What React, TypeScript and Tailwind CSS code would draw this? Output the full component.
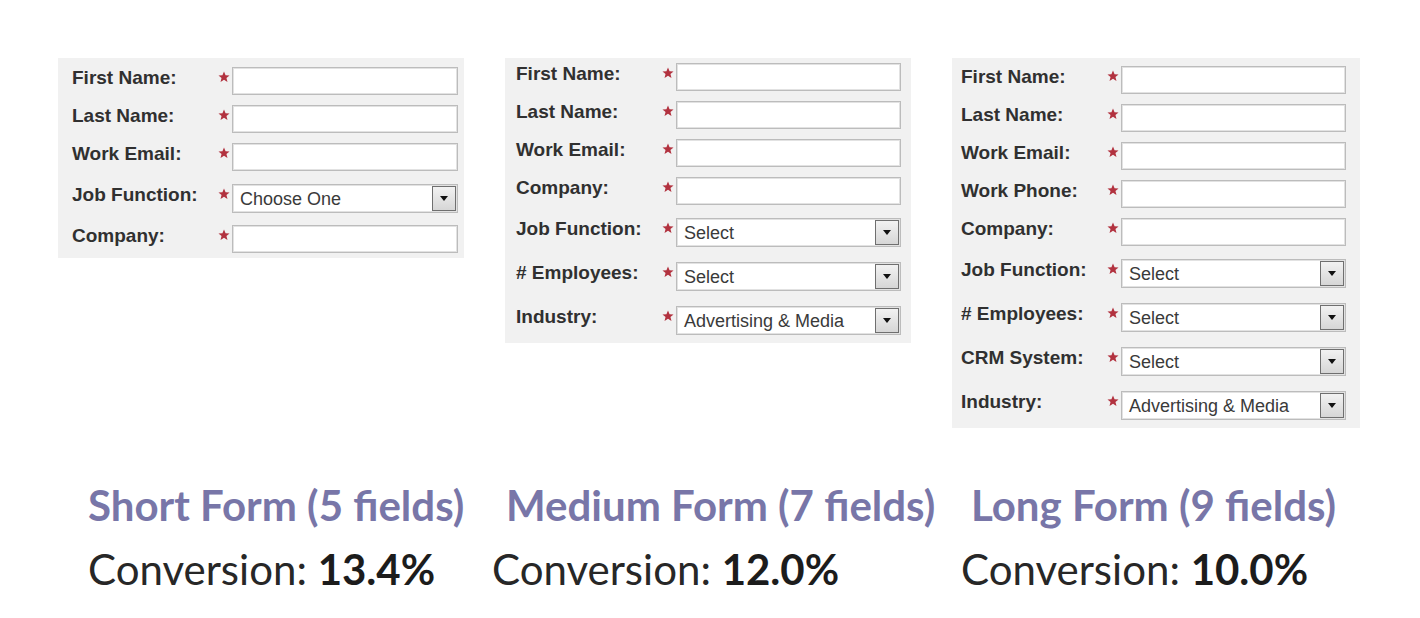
import React from "react";

type Field = { label: string; select?: string };

const shortForm: Field[] = [
  { label: "First Name:" },
  { label: "Last Name:" },
  { label: "Work Email:" },
  { label: "Job Function:", select: "Choose One" },
  { label: "Company:" },
];

const mediumForm: Field[] = [
  { label: "First Name:" },
  { label: "Last Name:" },
  { label: "Work Email:" },
  { label: "Company:" },
  { label: "Job Function:", select: "Select" },
  { label: "# Employees:", select: "Select" },
  { label: "Industry:", select: "Advertising & Media" },
];

const longForm: Field[] = [
  { label: "First Name:" },
  { label: "Last Name:" },
  { label: "Work Email:" },
  { label: "Work Phone:" },
  { label: "Company:" },
  { label: "Job Function:", select: "Select" },
  { label: "# Employees:", select: "Select" },
  { label: "CRM System:", select: "Select" },
  { label: "Industry:", select: "Advertising & Media" },
];

function Star() {
  return (
    <svg width="12" height="12" viewBox="0 0 20 20" className="mt-[4px]">
      <path
        d="M10 1 L12.6 7.2 L19.2 7.6 L14.1 11.8 L15.8 18.3 L10 14.7 L4.2 18.3 L5.9 11.8 L0.8 7.6 L7.4 7.2 Z"
        fill="#b2323f"
      />
    </svg>
  );
}

function Row({ f, inputW }: { f: Field; inputW: string }) {
  const font = { fontFamily: '"Liberation Sans", Arial, sans-serif' };
  return (
    <div className={f.select ? "flex items-start shrink-0 h-[44px] pt-[3px]" : "flex items-start shrink-0 h-[38px]"}>
      <div className="w-[146px] shrink-0 text-[19px] leading-[22px] font-bold text-[#303030] whitespace-nowrap" style={font}>
        {f.label}
      </div>
      <div className="w-[14px] shrink-0 flex justify-start">
        <Star />
      </div>
      {f.select ? (
        <div className={`${inputW} h-[29px] shrink-0 bg-white border border-[#bcbcbc] shadow-[inset_0_0_0_1px_#e2e2e2] flex items-center justify-between pl-[7px] pr-[1px]`}>
          <span className="text-[18px] text-[#3a3a3a] whitespace-nowrap leading-none" style={font}>
            {f.select}
          </span>
          <div className="w-[24px] h-[25px] border border-[#6f6f6f] bg-gradient-to-b from-[#f2f2f2] to-[#d6d6d6] flex items-center justify-center">
            <svg width="8" height="5" viewBox="0 0 8 5">
              <path d="M0 0 L8 0 L4 5 Z" fill="#111" />
            </svg>
          </div>
        </div>
      ) : (
        <div className={`${inputW} h-[28px] shrink-0 bg-white border border-[#bcbcbc] shadow-[inset_0_0_0_1px_#e2e2e2]`} />
      )}
    </div>
  );
}

function Panel({
  fields,
  cls,
  inputW,
}: {
  fields: Field[];
  cls: string;
  inputW: string;
}) {
  return (
    <div className={`bg-[#f1f1f1] flex flex-col shrink-0 ${cls}`}>
      {fields.map((f, i) => (
        <Row key={i} f={f} inputW={inputW} />
      ))}
    </div>
  );
}

function Stat({
  title,
  value,
  hCls,
  cCls,
}: {
  title: string;
  value: string;
  hCls: string;
  cCls: string;
}) {
  const font = { fontFamily: 'Lato, "Open Sans", sans-serif' };
  return (
    <div className="flex flex-col">
      <div className={`text-[42px] leading-[46px] font-bold text-[#7876a8] whitespace-nowrap ${hCls}`} style={font}>
        {title}
      </div>
      <div className={`mt-[18px] text-[42px] leading-[46px] text-[#272727] whitespace-nowrap ${cCls}`} style={font}>
        Conversion: <span className="font-bold text-[#1c1c1c]">{value}</span>
      </div>
    </div>
  );
}

export default function App() {
  return (
    <div className="w-[1420px] h-[618px] bg-white overflow-hidden pt-[58px]">
      <div className="flex items-start h-[370px]">
        <Panel fields={shortForm} cls="ml-[58px] w-[406px] h-[200px] pl-[14px] pt-[9px]" inputW="w-[226px]" />
        <Panel fields={mediumForm} cls="ml-[41px] w-[406px] h-[285px] pl-[11px] pt-[5px]" inputW="w-[225px]" />
        <Panel fields={longForm} cls="ml-[41px] w-[408px] h-[370px] pl-[9px] pt-[8px]" inputW="w-[225px]" />
      </div>
      <div className="flex items-start mt-[54px]">
        <div className="ml-[88px] w-[404px] shrink-0">
          <Stat title="Short Form (5 fields)" value="13.4%" hCls="" cCls="" />
        </div>
        <div className="w-[469px] shrink-0">
          <Stat title="Medium Form (7 fields)" value="12.0%" hCls="ml-[14px]" cCls="" />
        </div>
        <div className="shrink-0">
          <Stat title="Long Form (9 fields)" value="10.0%" hCls="ml-[10px]" cCls="" />
        </div>
      </div>
    </div>
  );
}
